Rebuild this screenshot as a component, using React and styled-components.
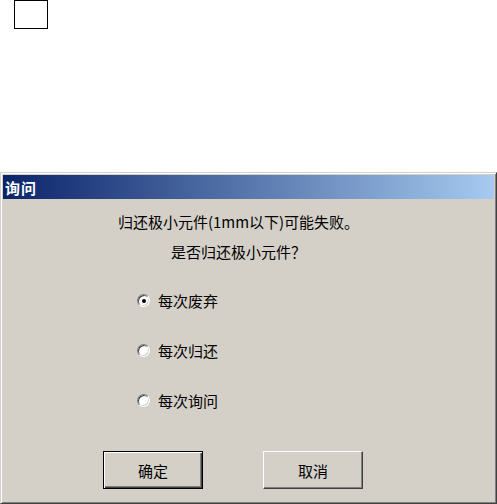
import styled, { createGlobalStyle } from 'styled-components';

const GlobalStyle = createGlobalStyle`
  html, body {
    margin: 0;
    padding: 0;
    background: #ffffff;
  }
  body {
    font-family: "Noto Sans CJK SC", "Liberation Sans", sans-serif;
    color: #000;
  }
`;

const Marker = styled.div`
  width: 32px;
  height: 27px;
  margin-left: 14px;
  border: 1px solid #000;
`;

const Window = styled.div`
  width: 497px;
  margin-top: 143px;
  box-sizing: border-box;
  background: #d4d0c8;
  border: 1px solid;
  border-color: #d4d0c8 #404040 #404040 #d4d0c8;
  box-shadow: inset 1px 1px #ffffff, inset -1px -1px #808080;
  padding: 2px;
  display: flex;
  flex-direction: column;
`;

const TitleBar = styled.div`
  height: 24px;
  display: flex;
  align-items: center;
  padding-left: 2px;
  background: linear-gradient(to right, #0a246a, #a6caf0);
  color: #fff;
  font-weight: bold;
  font-size: 15px;
  letter-spacing: 1px;
`;

const Body = styled.div`
  display: flex;
  flex-direction: column;
  padding-top: 8px;
  padding-bottom: 12px;
`;

const Message = styled.div`
  padding-right: 20px;
  text-align: center;
  font-size: 15px;
  line-height: 30px;
`;

const Options = styled.div`
  display: flex;
  flex-direction: column;
  margin-top: 8px;
  padding-left: 134px;
`;

const Option = styled.label`
  height: 50px;
  display: flex;
  align-items: center;
  gap: 8px;
  font-size: 15px;
`;

const Radio = styled.span`
  position: relative;
  width: 13px;
  height: 13px;
  margin-top: 1px;
  box-sizing: border-box;
  border-radius: 50%;
  background: #fff;
  border: 1px solid;
  border-color: #808080 #ffffff #ffffff #808080;
  box-shadow: inset 1px 1px #404040, inset -1px -1px #d4d0c8;

  &::after {
    content: '';
    display: ${(p) => (p.$checked ? 'block' : 'none')};
    position: absolute;
    left: 3.5px;
    top: 3.5px;
    width: 4px;
    height: 4px;
    border-radius: 50%;
    background: #000;
  }
`;

const Buttons = styled.div`
  display: flex;
  gap: 60px;
  margin-top: 26px;
  padding-left: 100px;
`;

const Button = styled.button`
  width: 100px;
  height: 38px;
  padding: 0;
  box-sizing: border-box;
  background: #d4d0c8;
  font-family: inherit;
  font-size: 15px;
  color: #000;
  border: 1px solid;
  border-color: ${(p) => (p.$default ? '#000' : '#fff #404040 #404040 #fff')};
  box-shadow: ${(p) =>
    p.$default
      ? 'inset 1px 1px #fff, inset -1px -1px #404040, inset -2px -2px #808080'
      : 'inset -1px -1px #808080'};
`;

const options = [
  { label: '每次废弃', checked: true },
  { label: '每次归还', checked: false },
  { label: '每次询问', checked: false },
];

export default function App() {
  return (
    <>
      <GlobalStyle />
      <Marker />
      <Window>
        <TitleBar>询问</TitleBar>
        <Body>
          <Message>
            <div>归还极小元件(1mm以下)可能失败。</div>
            <div>是否归还极小元件？</div>
          </Message>
          <Options>
            {options.map((o) => (
              <Option key={o.label}>
                <Radio $checked={o.checked} />
                {o.label}
              </Option>
            ))}
          </Options>
          <Buttons>
            <Button $default>确定</Button>
            <Button>取消</Button>
          </Buttons>
        </Body>
      </Window>
    </>
  );
}
